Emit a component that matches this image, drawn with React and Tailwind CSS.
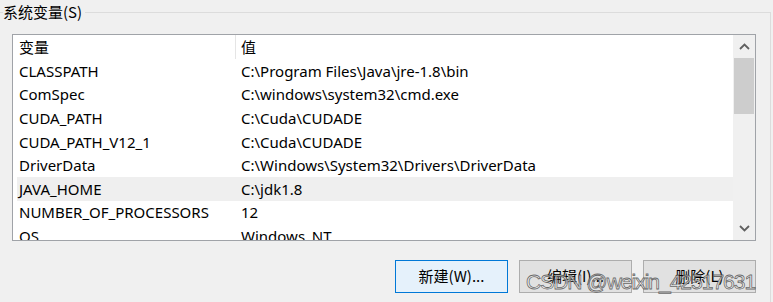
import React from "react";

const rows = [
  ["CLASSPATH", "C:\\Program Files\\Java\\jre-1.8\\bin"],
  ["ComSpec", "C:\\windows\\system32\\cmd.exe"],
  ["CUDA_PATH", "C:\\Cuda\\CUDADE"],
  ["CUDA_PATH_V12_1", "C:\\Cuda\\CUDADE"],
  ["DriverData", "C:\\Windows\\System32\\Drivers\\DriverData"],
  ["JAVA_HOME", "C:\\jdk1.8"],
  ["NUMBER_OF_PROCESSORS", "12"],
  ["OS", "Windows_NT"],
];

function Chevron({ up }) {
  return (
    <svg width="11" height="7" viewBox="0 0 11 7" className="block">
      <path
        d={up ? "M1 6 L5.5 1.5 L10 6" : "M1 1 L5.5 5.5 L10 1"}
        fill="none"
        stroke="#606060"
        strokeWidth="1.8"
      />
    </svg>
  );
}

export default function App() {
  return (
    <div className="w-[773px] h-[302px] bg-[#f0f0f0] overflow-hidden relative text-[15px] text-[#000] font-['Noto_Sans','Noto_Sans_CJK_SC',sans-serif]">
      <div className="mt-[12px] mr-[2px] h-[300px] border-t border-r border-[#dcdcdc] relative pt-[21px] pl-[12px]">
        <div className="absolute -top-[11px] left-[3px] bg-[#f0f0f0] pr-[3px] leading-[20px] font-['Noto_Sans_CJK_SC',sans-serif]">
          系统变量(S)
        </div>
        <div className="w-[744px] h-[207px] border border-[#a0a3a8] bg-white flex">
          <div className="flex-1 flex flex-col overflow-hidden">
            <div className="h-[24px] flex shrink-0 items-center">
              <div className="w-[223px] h-full pl-[6px] border-r border-[#e5e5e5] flex items-center font-['Noto_Sans_CJK_SC',sans-serif]">
                变量
              </div>
              <div className="pl-[5px] font-['Noto_Sans_CJK_SC',sans-serif]">值</div>
            </div>
            {rows.map(([k, v]) => (
              <div
                key={k}
                className={
                  "h-[23.6px] shrink-0 ml-[4px] flex items-center leading-[20px] whitespace-nowrap " +
                  (k === "JAVA_HOME" ? "bg-[#efefef]" : "")
                }
              >
                <div className="w-[222px] pl-[2px] shrink-0">{k}</div>
                <div className="pl-[2px]">{v}</div>
              </div>
            ))}
          </div>
          <div className="w-[22px] bg-[#f0f0f0] flex flex-col">
            <div className="h-[23px] flex items-center justify-center">
              <Chevron up />
            </div>
            <div className="h-[56px] mx-[1px] bg-[#cdcdcd]" />
            <div className="flex-1" />
            <div className="h-[23px] flex items-center justify-center">
              <Chevron />
            </div>
          </div>
        </div>
        <div className="mt-[19px] flex justify-end gap-[11px] pr-[14px] font-['Noto_Sans_CJK_SC',sans-serif]">
          <button className="w-[113px] h-[33px] border border-[#0078d7] bg-[#e5f1fb] flex items-center justify-center">
            新建(W)...
          </button>
          <button className="w-[113px] h-[33px] border border-[#adadad] bg-[#e1e1e1] flex items-center justify-center">
            编辑(I)...
          </button>
          <button className="w-[113px] h-[33px] border border-[#adadad] bg-[#e1e1e1] flex items-center justify-center">
            删除(L)
          </button>
        </div>
      </div>
      <div className="absolute left-[526px] top-[269px] text-[21px] leading-[26px] tracking-[-1px] whitespace-nowrap font-['Liberation_Sans',sans-serif] text-[rgba(255,255,255,0.6)] [-webkit-text-stroke:0.8px_rgba(80,80,80,0.85)]">
        CSDN @weixin_42517631
      </div>
    </div>
  );
}
